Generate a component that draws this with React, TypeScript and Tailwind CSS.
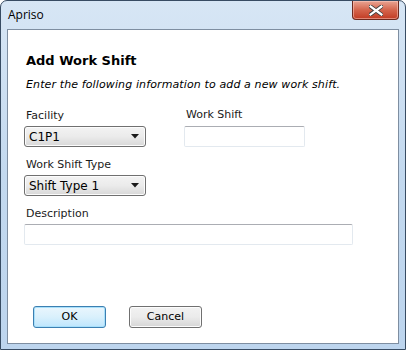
function Select({ value }: { value: string }) {
  return (
    <div className="flex h-[21px] w-[122px] items-center justify-between rounded-[3px] border border-[#707070] bg-gradient-to-b from-[#f3f3f3] via-[#ebebeb] to-[#d8d8d8] pl-[4px] pr-[6px] shadow-[inset_0_0_0_1px_#fcfcfc]">
      <span className="text-[12px] leading-none text-[#000]">{value}</span>
      <svg width="8" height="5" viewBox="0 0 8 5">
        <path d="M0 0H8L4 4.5Z" fill="#1a1a1a" />
      </svg>
    </div>
  );
}

function TextBox({ w }: { w: string }) {
  return (
    <div
      className={`h-[21px] ${w} rounded-[2px] border border-[#e3e9ef] border-t-[#abadb3] bg-white`}
    />
  );
}

export default function App() {
  return (
    <div
      className="flex h-[350px] w-[406px] flex-col overflow-hidden rounded-t-[7px] border border-[#384c63] bg-gradient-to-b from-[#d7e6f5] via-[#c3d9ef] to-[#bdd5ee] text-[#1b1b1b]"
      style={{ fontFamily: '"DejaVu Sans", Verdana, sans-serif' }}
    >
      {/* title bar */}
      <div className="relative flex h-[28px] shrink-0 items-start">
        <span
          className="ml-[7px] mt-[6px] text-[12px] leading-[15px] text-black"
          style={{ fontFamily: '"Open Sans", "Noto Sans", sans-serif' }}
        >
          Apriso
        </span>
        <div className="ml-auto mr-[6px] flex h-[19px] w-[47px] items-center justify-center rounded-b-[4px] border border-t-0 border-[#6d2a1f] bg-gradient-to-b from-[#e8a493] via-[#d4644c] to-[#c13a22] shadow-[inset_0_0_0_1px_rgba(255,210,200,0.5)]">
          <svg width="14" height="11" viewBox="0 0 14 11">
            <path
              d="M1.5 1.5L12.5 9.5M12.5 1.5L1.5 9.5"
              stroke="#3d3d3d"
              strokeWidth="4"
              strokeLinecap="square"
            />
            <path
              d="M1.5 1.5L12.5 9.5M12.5 1.5L1.5 9.5"
              stroke="#ffffff"
              strokeWidth="2.2"
              strokeLinecap="square"
            />
          </svg>
        </div>
      </div>

      {/* content */}
      <div className="mx-[6px] flex h-[315px] flex-col border border-[#7e8ea1] bg-white pl-[16px]">
        <div className="mt-[23px] pl-[2px] text-[13px] font-bold leading-[16px] text-black">
          Add Work Shift
        </div>
        <div className="mt-[9px] pl-[2px] text-[11px] italic leading-[14px] tracking-[0.12px] text-black">
          Enter the following information to add a new work shift.
        </div>

        <div className="mt-[17px] flex">
          <div className="flex w-[160px] flex-col">
            <span className="pl-[2px] text-[11px] leading-[14px]">Facility</span>
            <div className="mt-[3px]">
              <Select value="C1P1" />
            </div>
          </div>
          <div className="flex flex-col">
            <span className="-mt-[1px] pl-[2px] text-[11px] leading-[14px]">Work Shift</span>
            <div className="mt-[4px]">
              <TextBox w="w-[121px]" />
            </div>
          </div>
        </div>

        <div className="mt-[11px] flex flex-col">
          <span className="pl-[2px] text-[11px] leading-[14px]">Work Shift Type</span>
          <div className="mt-[3px]">
            <Select value="Shift Type 1" />
          </div>
        </div>

        <div className="mt-[11px] flex flex-col">
          <span className="pl-[2px] text-[11px] leading-[14px]">Description</span>
          <div className="mt-[3px]">
            <TextBox w="w-[329px]" />
          </div>
        </div>

        <div className="mt-[61px] flex gap-[23px] pl-[9px]">
          <button className="flex h-[22px] w-[73px] items-center justify-center rounded-[3px] border border-[#3c7fb1] bg-gradient-to-b from-[#eaf6fd] via-[#d9f0fc] to-[#bee6fd] text-[11px] text-black shadow-[inset_0_0_0_1px_#a8e0fb]">
            OK
          </button>
          <button className="flex h-[22px] w-[73px] items-center justify-center rounded-[3px] border border-[#707070] bg-gradient-to-b from-[#f2f2f2] via-[#ebebeb] to-[#d6d6d6] text-[11px] text-black shadow-[inset_0_0_0_1px_#fcfcfc]">
            Cancel
          </button>
        </div>
      </div>
    </div>
  );
}
